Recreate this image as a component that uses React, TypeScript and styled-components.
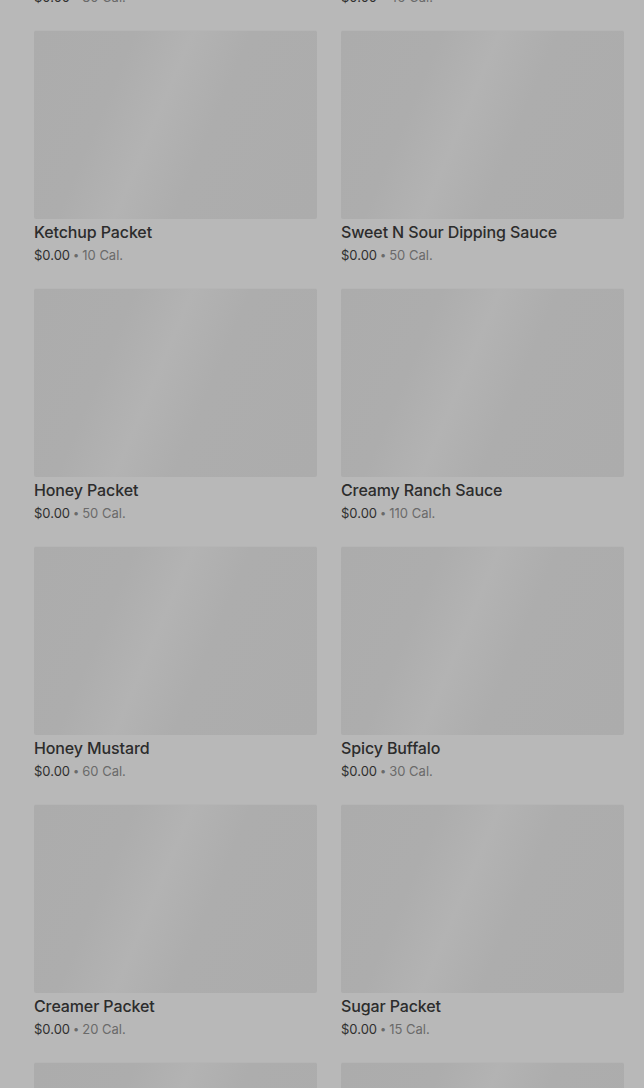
import styled, {createGlobalStyle} from "styled-components";

const GlobalStyle = createGlobalStyle`
  html, body {
    margin: 0;
    padding: 0;
    background: #b8b8b8;
    font-family: Inter, "Noto Sans", sans-serif;
    overflow: hidden;
  }
`;

const StyledPage = styled.div`
  height: 1088px;
  overflow: hidden;
  background: #b8b8b8;
`;

const StyledGrid = styled.div`
  display: grid;
  grid-template-columns: 283px 283px;
  column-gap: 24px;
  row-gap: 24px;
  padding-left: 34px;
  margin-top: -228px;
`;

const StyledCard = styled.div`
  display: flex;
  flex-direction: column;
`;

const StyledImage = styled.div`
  height: 189px;
  border-radius: 2px;
  border-top: 1px solid #b5b5b5;
  box-sizing: border-box;
  background: linear-gradient(113deg, #acacac 0%, #adadad 28%, #b3b3b3 44%, #adadad 60%, #acacac 100%);
`;

const StyledTitle = styled.div`
  margin-top: 3px;
  font-size: 16px;
  line-height: 20px;
  font-weight: 500;
  color: #2c2c2c;
  letter-spacing: -0.12px;
`;

const StyledPrice = styled.div`
  margin-top: 4px;
  font-size: 13px;
  line-height: 18px;
  color: #2f2f2f;
  display: flex;
  align-items: center;
`;

const StyledDot = styled.span`
  color: #6a6a6a;
  margin: 0 3px;
  font-size: 11px;
`;

const StyledCalories = styled.span`
  color: #6a6a6a;
`;

type Item = { name: string; cal: number };

const items: Item[] = [
    {name: "Barbecue Sauce", cal: 80},
    {name: "Hot Mustard", cal: 45},
    {name: "Ketchup Packet", cal: 10},
    {name: "Sweet N Sour Dipping Sauce", cal: 50},
    {name: "Honey Packet", cal: 50},
    {name: "Creamy Ranch Sauce", cal: 110},
    {name: "Honey Mustard", cal: 60},
    {name: "Spicy Buffalo", cal: 30},
    {name: "Creamer Packet", cal: 20},
    {name: "Sugar Packet", cal: 15},
    {name: "Salt Packet", cal: 0},
    {name: "Pepper Packet", cal: 0},
];

function App() {
    return (
        <>
            <GlobalStyle/>
            <StyledPage>
                <StyledGrid>
                    {items.map((item) => (
                        <StyledCard key={item.name}>
                            <StyledImage/>
                            <StyledTitle>{item.name}</StyledTitle>
                            <StyledPrice>
                                $0.00<StyledDot>•</StyledDot><StyledCalories>{item.cal} Cal.</StyledCalories>
                            </StyledPrice>
                        </StyledCard>
                    ))}
                </StyledGrid>
            </StyledPage>
        </>
    );
}

export default App;
